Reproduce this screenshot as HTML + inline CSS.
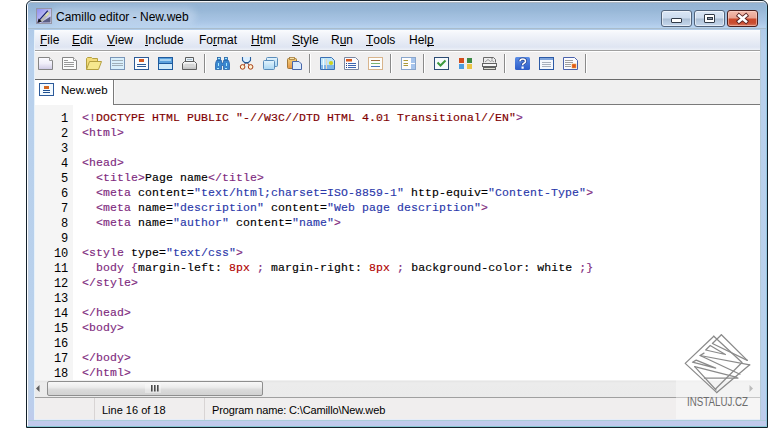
<!DOCTYPE html>
<html><head><meta charset="utf-8">
<style>
*{margin:0;padding:0;box-sizing:border-box}
html,body{width:768px;height:428px;overflow:hidden;background:#fff;font-family:"Liberation Sans",sans-serif}
.abs{position:absolute}
#win{position:absolute;left:26px;top:0;width:742px;height:428px;border:1px solid #12202a;border-radius:6px 6px 0 0;
 background:linear-gradient(#9dbcdf 0px,#a5c2e3 14px,#afcae8 26px,#b8d0ec 50px,#b9d1ec 380px,#bdcdec 410px,#c2c8ec 428px);overflow:hidden}
#win:before{content:"";position:absolute;left:0;top:0;width:739px;height:426px;border-top:1px solid #f4f7fb;border-left:1px solid #fbfdff;border-radius:5px 5px 0 0}
#fgl{left:28px;top:29px;width:1px;height:391px;background:#c2cfe0}
#frc{left:766px;top:6px;width:1px;height:421px;background:#94c6e0}
#fbc{left:27px;top:426px;width:740px;height:1px;background:#86c6d2}
#fbg{left:28px;top:420px;width:738px;height:1px;background:#aacbd8}
#frg{left:760px;top:29px;width:1px;height:391px;background:#b6cbd8}
#cel{left:34px;top:30px;width:1px;height:390px;background:#e6f1fa}
#ceb{left:34px;top:419px;width:726px;height:1px;background:#e6edf8}
#tbar{left:28px;top:2px;width:738px;height:27px;border-radius:4px 4px 0 0;background:linear-gradient(#a9b5c1 0,#a9b5c1 1px,#93b3d3 1px,#97b7d7 8px,#a0bedd 13px,#a6c3e3 18px,#afcae9 22px,#b7d2ee 25px,#b7d2ee 26px,#a9bccc 26px)}
#glow{left:50px;top:7px;width:146px;height:18px;background:rgba(230,240,252,.3);border-radius:9px;filter:blur(3px)}
#title{left:56px;top:10px;font-size:12px;color:#000;white-space:nowrap}
#client{left:34px;top:30px;width:726px;height:390px;background:#f0f0f0}
#menubar{left:34px;top:30px;width:726px;height:20px;background:linear-gradient(#fbfcfe 0,#f4f6fb 3px,#e9edf6 10px,#dfe5f2 17px,#e3e8f4 18px,#eef1f8 20px);}
#menuline{left:34px;top:50px;width:726px;height:1px;background:#a0a0a0}
#menuline2{left:34px;top:51px;width:726px;height:1px;background:#fff}
.menu{position:absolute;top:33px;font-size:12px;line-height:14px;color:#000;white-space:nowrap}
.menu u{text-decoration:none;position:relative}
.menu u:after{content:"";position:absolute;left:0;right:0;top:12px;height:1px;background:#000}
#toolbar{left:34px;top:52px;width:726px;height:27px;background:#f0efef}
.sep{position:absolute;top:54px;width:1px;height:19px;background:#8c8c8c;box-shadow:1px 0 0 #fff}
.ic{position:absolute;top:56px;width:16px;height:16px}
#tabbar{left:34px;top:79px;width:726px;height:1px;background:#6a6a6a}
#tabstrip{left:34px;top:80px;width:726px;height:25px;background:#f0f0f0}
#tab{left:34px;top:80px;width:79px;height:25px;background:#fff}
#tabr{left:113px;top:80px;width:1px;height:25px;background:#7a7a7a}
#tabb{left:113px;top:104px;width:647px;height:1px;background:#7a7a7a}
#tabtxt{left:61px;top:83.5px;font-size:11.5px;color:#000}
#editor{left:34px;top:105px;width:726px;height:275px;background:#fff}
#gutter{left:34px;top:105px;width:39px;height:275px;background:#f5f5f5}
.ln{position:absolute;left:34px;width:34px;margin-top:1.5px;text-align:right;font-family:"Liberation Mono",monospace;font-size:12px;letter-spacing:-0.2px;color:#000;line-height:15px}
.code{position:absolute;left:82px;-webkit-text-stroke:0.15px;font-family:"Liberation Mono",monospace;font-size:11.5px;letter-spacing:0.1px;color:#000;white-space:pre;line-height:15px}
.p{color:#7e2a7e}.r{color:#800000}.b{color:#2a38aa}.n{color:#b00000}
#hscroll{left:34px;top:381px;width:726px;height:16px;background:linear-gradient(#e4e4e4,#ececec 2px,#ebebeb)}
#thumb{left:47px;top:381px;width:216px;height:15px;border:1px solid #8e8e8e;border-radius:2px;background:linear-gradient(#f8f8f8,#ececec 40%,#dadada 60%,#d2d2d2)}
#status{left:34px;top:397px;width:726px;height:23px;background:#f0eeee;border-top:1px solid #a0a0a0}
.stsep{position:absolute;top:398px;width:1px;height:22px;background:#d8d4d4}
.st{position:absolute;top:403.5px;font-size:11px;color:#000;white-space:nowrap}

.cb{position:absolute;top:10px;height:17px;border:1px solid #52647c;border-radius:3px;overflow:hidden;
 background:linear-gradient(#d9e6f5 0,#cddcef 7px,#a9bdd3 8px,#b4c7dd 10px,#c6d8ed 100%);box-shadow:inset 0 0 0 1px rgba(255,255,255,.55)}
#bmin{left:661px;width:31px}
#bmax{left:694px;width:31px}
#bclose{left:727px;width:31px;border-color:#4a2020;background:linear-gradient(#f2bcae 0,#e9a291 7px,#cc4a2c 8px,#c84c30 12px,#da7c64 100%);box-shadow:inset 0 0 0 1px rgba(255,220,210,.5)}
.gmin{position:absolute;left:9px;top:7px;width:11px;height:5px;background:#fff;border:1px solid #303a48;border-radius:1px}
.gmax{position:absolute;left:9px;top:3px;width:11px;height:9px;background:#fff;border:1px solid #303a48;border-radius:1px}
.gmax:after{content:"";position:absolute;left:2px;top:2px;width:4px;height:1px;background:#8c98a8;border:1px solid #303a48}
</style></head><body>
<div id="win"></div>
<div class="abs" id="fgl"></div><div class="abs" id="frc"></div><div class="abs" id="fbc"></div><div class="abs" id="fbg"></div><div class="abs" id="frg"></div>
<div class="abs" id="tbar"></div>
<div class="abs" id="glow"></div>
<div class="abs" id="title">Camillo editor - New.web</div>
<div class="cb" id="bmin"><div class="gmin"></div></div>
<div class="cb" id="bmax"><div class="gmax"></div></div>
<div class="cb" id="bclose"><svg style="position:absolute;left:0;top:0" width="29" height="15" viewBox="0 0 29 15"><path d="M11 4.6 L18 10.4 M18 4.6 L11 10.4" stroke="#5a2424" stroke-width="4.4" stroke-linecap="square"/><path d="M11 4.6 L18 10.4 M18 4.6 L11 10.4" stroke="#fff" stroke-width="2.6" stroke-linecap="square"/></svg></div>
<div class="abs" id="client"></div>
<div class="abs" id="menubar"></div>
<div class="abs" id="menuline"></div>
<div class="abs" id="menuline2"></div>
<div class="menu" style="left:40px"><u>F</u>ile</div>
<div class="menu" style="left:72px"><u>E</u>dit</div>
<div class="menu" style="left:107px"><u>V</u>iew</div>
<div class="menu" style="left:145px"><u>I</u>nclude</div>
<div class="menu" style="left:199px">Fo<u>r</u>mat</div>
<div class="menu" style="left:251px"><u>H</u>tml</div>
<div class="menu" style="left:292px"><u>S</u>tyle</div>
<div class="menu" style="left:331px">R<u>u</u>n</div>
<div class="menu" style="left:366px"><u>T</u>ools</div>
<div class="menu" style="left:409px">Hel<u>p</u></div>
<div class="abs" id="toolbar"></div>
<svg class="abs" style="left:0;top:0" width="768" height="80" viewBox="0 0 768 80">
<defs>
<linearGradient id="gNew" x1="0" y1="0" x2="0" y2="1"><stop offset="0" stop-color="#fbfbff"/><stop offset=".5" stop-color="#f0eef9"/><stop offset="1" stop-color="#cdc8e4"/></linearGradient>
<linearGradient id="gBlue" x1="0" y1="0" x2="0" y2="1"><stop offset="0" stop-color="#e4f4fd"/><stop offset="1" stop-color="#a9d6f3"/></linearGradient>
<linearGradient id="gHelp" x1="0" y1="0" x2="0" y2="1"><stop offset="0" stop-color="#5c8ee6"/><stop offset="1" stop-color="#2c5cc8"/></linearGradient>
<linearGradient id="gPr" x1="0" y1="0" x2="0" y2="1"><stop offset="0" stop-color="#fdfdfd"/><stop offset="1" stop-color="#bcbcbc"/></linearGradient>
<linearGradient id="gClip" x1="0" y1="0" x2="0" y2="1"><stop offset="0" stop-color="#f2d07a"/><stop offset="1" stop-color="#e59448"/></linearGradient>
</defs>
<g shape-rendering="crispEdges" fill="none">
<!-- separators -->
<g fill="#8a8a8a"><rect x="204" y="54" width="1" height="19"/><rect x="309" y="54" width="1" height="19"/><rect x="390" y="54" width="1" height="19"/><rect x="423" y="54" width="1" height="19"/><rect x="504" y="54" width="1" height="19"/><rect x="585" y="54" width="1" height="19"/></g>
<g fill="#ffffff"><rect x="205" y="54" width="1" height="19"/><rect x="310" y="54" width="1" height="19"/><rect x="391" y="54" width="1" height="19"/><rect x="424" y="54" width="1" height="19"/><rect x="505" y="54" width="1" height="19"/><rect x="586" y="54" width="1" height="19"/></g>
</g>
<g>
<!-- 1 new doc -->
<path d="M38.5 57.5 H49.5 L52.5 60.5 V69.5 H38.5 Z" fill="url(#gNew)" stroke="#858585"/>
<path d="M49.5 57.5 V60.5 H52.5" fill="#fff" stroke="#9a9a9a"/>
<!-- 2 doc lines -->
<path d="M62.5 57.5 H73.5 L76.5 60.5 V69.5 H62.5 Z" fill="#fdfdfd" stroke="#858585"/>
<path d="M73.5 57.5 V60.5 H76.5" fill="#fff" stroke="#9a9a9a"/>
<g stroke="#9a9a9a"><path d="M64 60.5 H68"/><path d="M64 62.5 H74"/><path d="M64 64.5 H74"/><path d="M64 66.5 H74"/></g>
<!-- 3 folder -->
<path d="M86.5 69.5 V58.5 L87.5 57.5 H91.5 L92.5 58.5 H97.5 V61.5" fill="#f3dc7a" stroke="#b4a040"/>
<path d="M86.5 69.5 L89.5 61.5 H101.5 L98.5 69.5 Z" fill="#f6e88e" stroke="#b4a040"/>
<!-- 4 -->
<rect x="110.5" y="57.5" width="14" height="12" fill="#d9effb" stroke="#7a96b8"/>
<g stroke="#a0aeb8"><path d="M112 60.5 H123"/><path d="M112 63.5 H123"/><path d="M112 65.5 H123"/></g>
<!-- 5 -->
<rect x="134.5" y="57.5" width="14" height="12" fill="#fbfdff" stroke="#2d5a96"/>
<rect x="139" y="59" width="5" height="3" fill="#d65a22"/>
<g stroke="#2d5a96"><path d="M137 64.5 H146"/><path d="M137 66.5 H146"/></g>
<!-- 6 -->
<rect x="158.5" y="57.5" width="14" height="12" fill="#cfeafa" stroke="#1f5b9e"/>
<rect x="159" y="58" width="13" height="5" fill="#5aa0dc"/>
<rect x="160" y="59" width="11" height="2" fill="#a6d2f2"/>
<path d="M159 63.5 H172" stroke="#1f5b9e"/>
<!-- 7 printer -->
<path d="M185.5 61.5 V57.5 H193.5 V61.5" fill="#e9f2f8" stroke="#5c5c5c"/>
<path d="M187 59.5 H192" stroke="#a9bccb"/>
<path d="M182.5 69.5 V63.5 L184.5 61.5 H194.5 L196.5 63.5 V69.5 Z" fill="url(#gPr)" stroke="#5f5f5f"/>
<rect x="185" y="64" width="9" height="3" fill="#d6d6d6"/>
<!-- 8 binoculars -->
<g fill="#3a86cf" stroke="#2766a8" stroke-width=".8">
<rect x="217.5" y="57.5" width="3" height="3"/><rect x="224.5" y="57.5" width="3" height="3"/>
<path d="M216.5 60.5 H221.5 V63 H223.5 V60.5 H228.5 L229.5 63.5 V69.5 H223.5 V65.5 H221.5 V69.5 H215.5 V63.5 Z"/>
</g>
<g fill="#a8ecff"><rect x="218" y="58" width="2" height="1"/><rect x="225" y="58" width="2" height="1"/><rect x="218" y="63" width="1" height="3"/><rect x="226" y="63" width="1" height="3"/><rect x="217" y="68" width="2" height="1"/><rect x="225" y="68" width="2" height="1"/></g>
<!-- 9 scissors -->
<path d="M242.5 57 V60.5 L244.5 62.5 H248.5 L250.5 60.5 V57" fill="#dcefff" stroke="#2b609e" stroke-width="1.1"/>
<path d="M244.5 63 H248.5" stroke="#24558f" stroke-width="1.3"/>
<g fill="#fff3d2" stroke="#a83c14" stroke-width="1"><circle cx="242.6" cy="66.9" r="2.3"/><circle cx="250.6" cy="66.9" r="2.3"/></g>
<path d="M244.2 64.9 L245.2 63.5 M247.8 63.5 L248.9 64.9" stroke="#a83c14" stroke-width="1"/>
<!-- 10 copy -->
<rect x="266.5" y="57.5" width="11" height="9" rx="1" fill="url(#gBlue)" stroke="#5b8dbb"/>
<rect x="263.5" y="60.5" width="11" height="9" rx="1" fill="url(#gBlue)" stroke="#5b8dbb"/>
<!-- 11 paste -->
<rect x="287.5" y="58.5" width="9" height="10" rx="1" fill="url(#gClip)" stroke="#a57a3a"/>
<rect x="289.5" y="57.5" width="5" height="2" fill="#f6e2a8" stroke="#a57a3a" stroke-width=".8"/>
<path d="M292.5 61.5 H299 L301.5 64 V69.5 H292.5 Z" fill="#dcebfc" stroke="#4866a8"/>
<!-- 12 -->
<path d="M320.5 57.5 H331.5 L334.5 60.5 V69.5 H320.5 Z" fill="#bfe6f8" stroke="#3a70b4"/>
<rect x="321" y="65" width="13" height="4" fill="#7fb6e6"/>
<rect x="323" y="59" width="1" height="10" fill="#f4fbff"/><rect x="326" y="59" width="1" height="10" fill="#e8d6c0"/>
<circle cx="331" cy="63" r="2.1" fill="#cdd21e"/>
<!-- 13 -->
<path d="M344.5 57.5 H355.5 L358.5 60.5 V69.5 H344.5 Z" fill="#fbfbfd" stroke="#7a86a0"/>
<rect x="346" y="59" width="6" height="2.5" fill="#d85a22"/>
<g fill="#1d3d86"><rect x="346" y="63" width="1" height="1"/><rect x="346" y="65" width="1" height="1"/><rect x="346" y="67" width="1" height="1"/></g>
<g stroke="#3a64b0"><path d="M348 63.5 H356"/><path d="M348 65.5 H356"/><path d="M348 67.5 H356"/></g>
<!-- 14 -->
<rect x="368.5" y="57.5" width="14" height="12" fill="#fdfdfb" stroke="#d8b48c"/>
<path d="M371 60.5 H380" stroke="#9c6a3c"/>
<path d="M371 63.5 H380" stroke="#7ab474"/>
<path d="M371 66.5 H380" stroke="#4872b8"/>
<!-- 15 -->
<rect x="401.5" y="57.5" width="14" height="12" fill="#fdfdfd" stroke="#8aa6cc"/>
<rect x="411" y="58" width="4" height="11" fill="#a6c4ec"/>
<path d="M411 63.5 H415" stroke="#fff"/>
<g stroke="#ad9a3a"><path d="M403.5 60.5 H408"/><path d="M403.5 63.5 H408"/><path d="M403.5 65.5 H408"/></g>
<!-- 16 check -->
<rect x="434.5" y="57.5" width="14" height="12" fill="#f6fafc" stroke="#2c4c74"/>
<path d="M437.5 62.5 L440.5 65.5 L445.5 60.5" fill="none" stroke="#3d9a3d" stroke-width="2"/>
<!-- 17 squares -->
<rect x="459" y="58" width="5" height="5" fill="#d24c1c"/><rect x="467" y="58" width="5" height="5" fill="#3d8a45"/>
<rect x="459" y="64" width="5" height="5" fill="#4c9ee2"/><rect x="467" y="64" width="5" height="5" fill="#ebc444"/>
<!-- 18 scanner -->
<path d="M483.5 62.5 V57.5 H493.5 L495.5 59.5 V62.5" fill="#ececec" stroke="#6a6a6a"/>
<path d="M485 62 L488 59.5 L490.5 61.5 L492 60.5 L494 62" fill="none" stroke="#9a9a9a"/><rect x="491" y="58" width="2" height="1.5" fill="#b0b0b0"/>
<rect x="482.5" y="63.5" width="14" height="3" fill="#f6f6f6" stroke="#626262"/>
<rect x="483.5" y="67.5" width="12" height="2" fill="#dcdcd0" stroke="#626262"/>
<!-- 19 help -->
<rect x="515" y="57" width="15" height="13" rx="1.5" fill="url(#gHelp)"/>
<path d="M520 61.3 Q520 59 522.7 59 Q525.5 59 525.5 61.2 Q525.5 62.6 523.6 63.4 Q522.6 63.9 522.6 65.3" stroke="#24408a" stroke-width="3" fill="none"/>
<path d="M520 61.3 Q520 59 522.7 59 Q525.5 59 525.5 61.2 Q525.5 62.6 523.6 63.4 Q522.6 63.9 522.6 65.3" stroke="#fff" stroke-width="1.6" fill="none"/>
<rect x="521.5" y="66.5" width="2.2" height="2.2" fill="#fff"/>
<!-- 20 window -->
<rect x="539.5" y="57.5" width="14" height="12" fill="#f4f8fd" stroke="#2c5aa6"/>
<rect x="540" y="58" width="13" height="2" fill="#7ea4dc"/>
<g stroke="#a8b0bc"><path d="M542 62.5 H551"/><path d="M542 64.5 H551"/><path d="M542 66.5 H551"/></g>
<!-- 21 doc orange -->
<path d="M563.5 57.5 H574.5 L577.5 60.5 V69.5 H563.5 Z" fill="#fbfbfe" stroke="#4a62ac"/>
<g stroke="#a0a0a0"><path d="M565 60.5 H573"/><path d="M565 62.5 H573"/><path d="M565 64.5 H571"/><path d="M565 66.5 H571"/></g>
<rect x="572" y="64" width="4" height="4" fill="#e0581a" stroke="#f0a040" stroke-width=".6"/>
</g>
</svg>

<div class="abs" id="tabbar"></div>
<div class="abs" id="tabstrip"></div>
<div class="abs" id="tab"></div>
<div class="abs" id="tabr"></div>
<div class="abs" id="tabb"></div><div class="abs" style="left:114px;top:80px;width:1px;height:24px;background:#fafafa"></div>
<div class="abs" id="tabtxt">New.web</div>
<div class="abs" id="editor"></div>
<div class="abs" id="gutter"></div>
<div class="ln" style="top:110px">1</div>
<div class="code" style="top:110px"><span class="p">&lt;!</span><span class="r">DOCTYPE HTML PUBLIC "-//W3C//DTD HTML 4.01 Transitional//EN"</span><span class="p">&gt;</span></div>
<div class="ln" style="top:125px">2</div>
<div class="code" style="top:125px"><span class="p">&lt;html&gt;</span></div>
<div class="ln" style="top:140px">3</div>
<div class="ln" style="top:155px">4</div>
<div class="code" style="top:155px"><span class="p">&lt;head&gt;</span></div>
<div class="ln" style="top:170px">5</div>
<div class="code" style="top:170px">  <span class="p">&lt;title&gt;</span>Page name<span class="p">&lt;/title&gt;</span></div>
<div class="ln" style="top:185px">6</div>
<div class="code" style="top:185px">  <span class="p">&lt;meta</span> content=<span class="b">"text/html;charset=ISO-8859-1"</span> http-equiv=<span class="b">"Content-Type"</span><span class="p">&gt;</span></div>
<div class="ln" style="top:200px">7</div>
<div class="code" style="top:200px">  <span class="p">&lt;meta</span> name=<span class="b">"description"</span> content=<span class="b">"Web page description"</span><span class="p">&gt;</span></div>
<div class="ln" style="top:215px">8</div>
<div class="code" style="top:215px">  <span class="p">&lt;meta</span> name=<span class="b">"author"</span> content=<span class="b">"name"</span><span class="p">&gt;</span></div>
<div class="ln" style="top:230px">9</div>
<div class="ln" style="top:245px">10</div>
<div class="code" style="top:245px"><span class="p">&lt;style</span> type=<span class="b">"text/css"</span><span class="p">&gt;</span></div>
<div class="ln" style="top:260px">11</div>
<div class="code" style="top:260px">  <span class="p">body {</span>margin-left:<span class="n"> 8px</span><span class="p"> ;</span> margin-right:<span class="n"> 8px</span><span class="p"> ;</span> background-color: white <span class="p">;}</span></div>
<div class="ln" style="top:275px">12</div>
<div class="code" style="top:275px"><span class="p">&lt;/style&gt;</span></div>
<div class="ln" style="top:290px">13</div>
<div class="ln" style="top:305px">14</div>
<div class="code" style="top:305px"><span class="p">&lt;/head&gt;</span></div>
<div class="ln" style="top:320px">15</div>
<div class="code" style="top:320px"><span class="p">&lt;body&gt;</span></div>
<div class="ln" style="top:335px">16</div>
<div class="ln" style="top:350px">17</div>
<div class="code" style="top:350px"><span class="p">&lt;/body&gt;</span></div>
<div class="ln" style="top:365px">18</div>
<div class="code" style="top:365px"><span class="p">&lt;/html&gt;</span></div>
<div class="abs" id="hscroll"></div>
<div class="abs" id="thumb"></div>
<div class="abs" id="status"></div>
<div class="abs" id="cel"></div><div class="abs" id="ceb"></div>
<div class="stsep" style="left:94px"></div>
<div class="stsep" style="left:204px"></div>
<div class="st" style="left:102px">Line 16 of 18</div>
<div class="st" style="left:212px;letter-spacing:-0.13px">Program name: C:\Camillo\New.web</div>
<svg class="abs" style="left:0;top:0" width="768" height="428" viewBox="0 0 768 428">
<defs>
<linearGradient id="gApp" x1="0" y1="0" x2="1" y2="1"><stop offset="0" stop-color="#8c8cf0"/><stop offset=".6" stop-color="#c4c4f4"/><stop offset="1" stop-color="#e8e8f8"/></linearGradient>
</defs>
<!-- app icon -->
<rect x="36.5" y="8.5" width="15" height="15" fill="url(#gApp)" stroke="#9696a6"/>
<path d="M41 22.5 L50.5 16.5 L50.5 22.5 Z" fill="#3a3e68" opacity=".8"/>
<path d="M39.5 20 L47.8 10.8" stroke="#1a2472" stroke-width="1.3"/>
<path d="M41 21.2 L49.5 12" stroke="#bdbdb8" stroke-width="2.8"/>
<path d="M45.8 15.9 L48.6 13" stroke="#dfe2a8" stroke-width="1.8"/>
<path d="M37.3 23 L38.6 18.6 L41.8 21.6 Z" fill="#141418"/>
<!-- tab icon -->
<rect x="39.5" y="83.5" width="14" height="12" fill="#f2f9fe" stroke="#2c5a9a"/>
<rect x="44" y="86" width="5" height="3" fill="#d4661e"/>
<rect x="43" y="90" width="7" height="1" fill="#1f4f8f"/>
<rect x="43" y="92" width="7" height="1" fill="#1f4f8f"/>
<!-- scroll arrows -->
<path d="M36 388.5 L39.5 385 V392 Z" fill="#606060"/>
<path d="M753 388.5 L749.5 385 V392 Z" fill="#909090"/>
<!-- scroll thumb grip -->
<rect x="145" y="384" width="16" height="9" fill="#fff" opacity=".35"/><g fill="#4a4a4a"><rect x="151" y="385" width="1.6" height="6.5"/><rect x="154" y="385" width="1.6" height="6.5"/><rect x="157" y="385" width="1.6" height="6.5"/></g>
</svg>

<div class="abs" style="left:676px;top:330px;width:84px;height:89px;background:rgba(255,255,255,.4)"></div>
<svg class="abs" style="left:0;top:0" width="768" height="428" viewBox="0 0 768 428">
<g fill="none" stroke="#8a8a8a" stroke-width="1.25" stroke-linejoin="round" stroke-linecap="round">
<path d="M713.8,336.2 L685.2,363.4 L716.8,392.6"/>
<path d="M721.4,334.8 L747.3,360.4"/>
<path d="M721.4,334.8 L712.4,343.5 L747.3,360.4"/>
<path d="M713.8,336.2 L741.5,362"/>
<path d="M710.2,345.5 L705.7,350 L725.4,354.5 Z"/>
<path d="M704,353.1 L700.1,355.5 L749.7,364.8"/>
<path d="M700.1,355.5 L740,374.2"/>
<path d="M749.7,364.8 L716.8,392.6"/>
<path d="M742,362.5 L715.5,389"/>
<path d="M696.2,360.1 L692.5,362.2 L715.7,368.2 Z"/>
<path d="M694.7,366.7 L737,377.3"/>
<path d="M694.7,366.7 L716,390"/>
<path d="M704.4,378 L738,378"/>
</g>
<text x="687" y="405.5" font-family="Liberation Sans" font-size="12" fill="#6c6c6c" textLength="61" lengthAdjust="spacingAndGlyphs">INSTALUJ.CZ</text>
</svg>

</body></html>
